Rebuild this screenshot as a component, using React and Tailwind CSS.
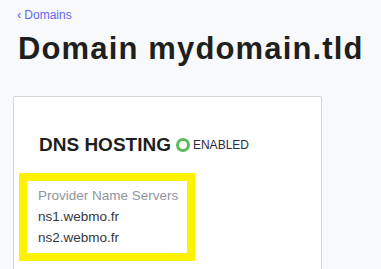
export default function App() {
  return (
    <div className="h-screen overflow-hidden bg-[#f8f9fa] pt-[7px]" style={{ fontFamily: '"Liberation Sans", Arial, sans-serif' }}>
      <div className="pl-[17px] flex items-center text-[12px] leading-4 text-[#6366f1]">
        <span className="mr-[3px] text-[13px]">‹</span>
        <span>Domains</span>
      </div>
      <h1 className="mt-[8px] pl-[18px] text-[31px] leading-9 font-bold tracking-[1.15px] text-[#1f1f1f]">Domain mydomain.tld</h1>
      <div className="mt-[29px] ml-[13px] w-[309px] h-[200px] bg-white border border-[#d4d4d8] rounded-[2px] pt-[36px]">
        <div className="pl-[25px] flex items-center">
          <span className="text-[19px] leading-6 font-bold text-[#1f1f1f]">DNS HOSTING</span>
          <span className="ml-[5px] w-[14px] h-[14px] rounded-full border-[3px] border-[#5cb85c]"></span>
          <span className="ml-[3px] text-[12px] leading-4 text-[#2a2a3a]">ENABLED</span>
        </div>
        <div className="mt-[16px] ml-[5px] w-[176px] border-[8px] border-[#fff200] px-[11px] pt-[4px] pb-[5px] text-[13.5px] leading-[21px] whitespace-nowrap">
          <div className="text-[#8f959e]">Provider Name Servers</div>
          <div className="text-[#333840]">ns1.webmo.fr</div>
          <div className="text-[#333840]">ns2.webmo.fr</div>
        </div>
      </div>
    </div>
  );
}
